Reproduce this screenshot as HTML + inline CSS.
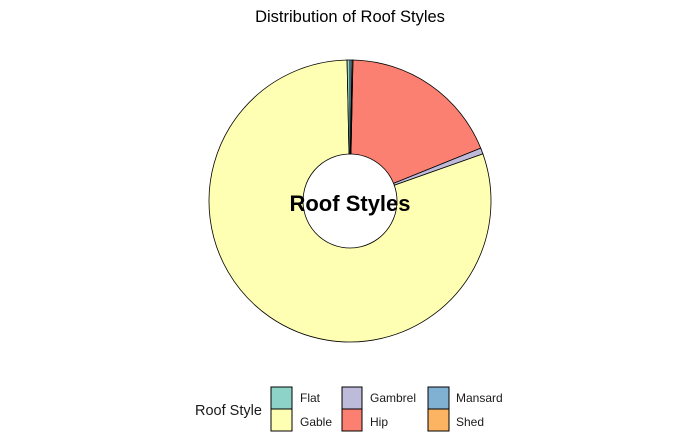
<!DOCTYPE html>
<html><head><style>body{margin:0;background:#fff;}svg{display:block;font-family:"Liberation Sans",Arial,sans-serif;}</style></head>
<body>
<svg width="700" height="432" xmlns="http://www.w3.org/2000/svg">
<rect width="700" height="432" fill="#fff"/>
<text x="350" y="22" text-anchor="middle" font-size="16.5" fill="#000">Distribution of Roof Styles</text>
<g stroke="#000" stroke-width="0.8">
<path d="M350.98,154.01 L352.95,60.03 A141,141 0 0 1 480.73,148.18 L393.58,183.39 A47,47 0 0 0 350.98,154.01Z" fill="#FB8072"/>
<path d="M393.58,183.39 L480.73,148.18 A141,141 0 0 1 482.91,153.93 L394.30,185.31 A47,47 0 0 0 393.58,183.39Z" fill="#BEBADA"/>
<path d="M394.30,185.31 L482.91,153.93 A141,141 0 1 1 347.05,60.03 L349.02,154.01 A47,47 0 1 0 394.30,185.31Z" fill="#FFFFB3"/>
<path d="M349.02,154.01 L347.05,60.03 A141,141 0 0 1 350,60 L350,154 A47,47 0 0 0 349.02,154.01Z" fill="#8DD3C7"/>
<path d="M350,154 L350,60 A141,141 0 0 1 351.97,60.01 L350.66,154 A47,47 0 0 0 350,154Z" fill="#80B1D3"/>
<path d="M350.66,154 L351.97,60.01 A141,141 0 0 1 352.95,60.03 L350.98,154.01 A47,47 0 0 0 350.66,154Z" fill="#FDB462"/>
</g>
<text x="350" y="211" text-anchor="middle" font-size="22" font-weight="bold" fill="#000">Roof Styles</text>
<text x="195" y="415" font-size="14.5" fill="#1a1a1a">Roof Style</text>
<g stroke="#000" stroke-width="1">
<rect x="271" y="387" width="21" height="22" fill="#8DD3C7"/>
<rect x="271" y="409" width="21" height="22" fill="#FFFFB3"/>
<rect x="342" y="387" width="20" height="22" fill="#BEBADA"/>
<rect x="342" y="409" width="20" height="22" fill="#FB8072"/>
<rect x="428" y="387" width="21" height="22" fill="#80B1D3"/>
<rect x="428" y="409" width="21" height="22" fill="#FDB462"/>
</g>
<g font-size="12" fill="#1a1a1a">
<text x="300" y="402">Flat</text>
<text x="300" y="426">Gable</text>
<text x="370" y="402">Gambrel</text>
<text x="370" y="426">Hip</text>
<text x="456" y="402">Mansard</text>
<text x="456" y="426">Shed</text>
</g>
</svg>
</body></html>
